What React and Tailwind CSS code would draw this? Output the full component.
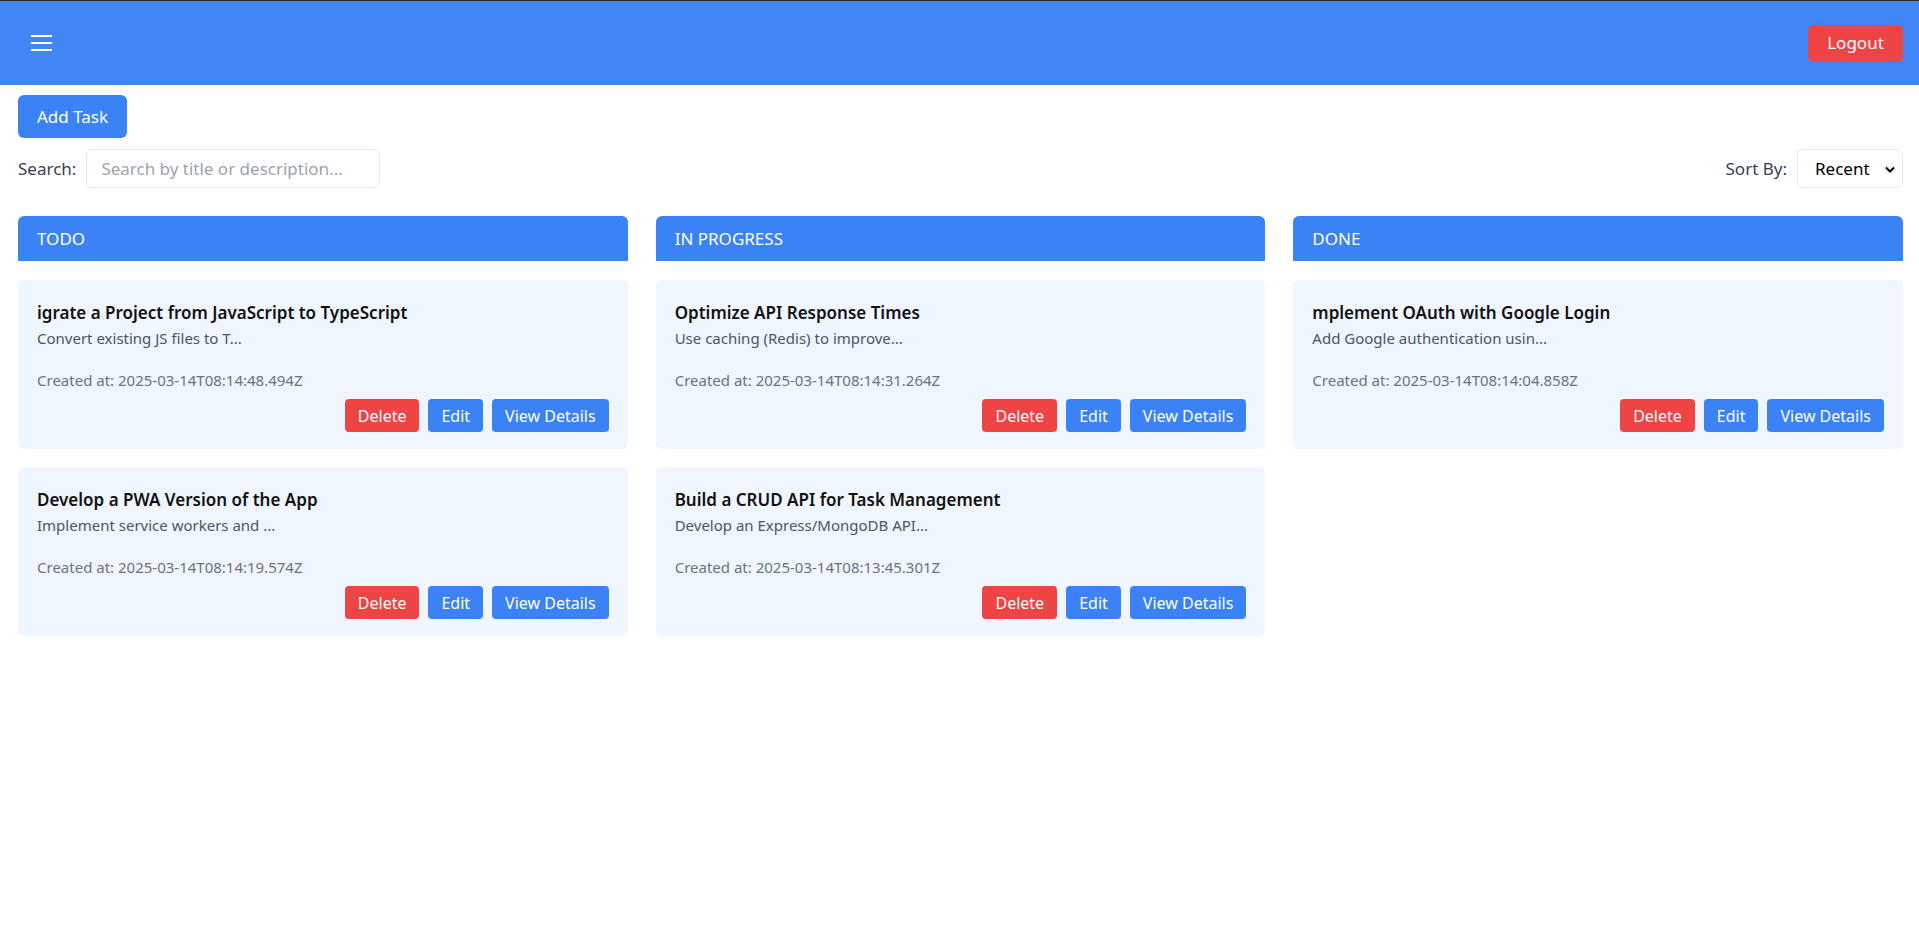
import React from "react";

const columns = [
  {
    name: "TODO",
    tasks: [
      {
        title: "igrate a Project from JavaScript to TypeScript",
        desc: "Convert existing JS files to T...",
        created: "2025-03-14T08:14:48.494Z",
      },
      {
        title: "Develop a PWA Version of the App",
        desc: "Implement service workers and ...",
        created: "2025-03-14T08:14:19.574Z",
      },
    ],
  },
  {
    name: "IN PROGRESS",
    tasks: [
      {
        title: "Optimize API Response Times",
        desc: "Use caching (Redis) to improve...",
        created: "2025-03-14T08:14:31.264Z",
      },
      {
        title: "Build a CRUD API for Task Management",
        desc: "Develop an Express/MongoDB API...",
        created: "2025-03-14T08:13:45.301Z",
      },
    ],
  },
  {
    name: "DONE",
    tasks: [
      {
        title: "mplement OAuth with Google Login",
        desc: "Add Google authentication usin...",
        created: "2025-03-14T08:14:04.858Z",
      },
    ],
  },
];

function TaskCard({ task }) {
  return (
    <div className="bg-[#eff6ff] rounded-md px-[19px] pt-[21px] pb-[17px]">
      <div className="text-[17px] leading-6 font-semibold text-[#111111]">{task.title}</div>
      <div className="mt-[3px] text-[15px] leading-5 text-[#4b5563]">{task.desc}</div>
      <div className="mt-[22px] text-[15px] leading-5 text-[#6b7280]">Created at: {task.created}</div>
      <div className="mt-[9px] flex justify-end gap-[9px]">
        <button className="h-[33px] px-[13px] rounded bg-[#ef4444] text-white text-base leading-6">Delete</button>
        <button className="h-[33px] px-[13px] rounded bg-[#3b82f6] text-white text-base leading-6">Edit</button>
        <button className="h-[33px] px-[13px] rounded bg-[#3b82f6] text-white text-base leading-6">View Details</button>
      </div>
    </div>
  );
}

export default function App() {
  return (
    <div
      className="min-h-screen bg-white"
      style={{ fontFamily: '"Segoe UI", "Noto Sans", "Open Sans", sans-serif' }}
    >
      <div className="h-px bg-[#2a2a2a]" />
      <nav className="h-[84px] bg-[#4285f4] flex items-center justify-between pl-[31px] pr-4">
        <svg width="21" height="16" viewBox="0 0 21 16" fill="none">
          <path d="M0 1h21M0 8h21M0 15h21" stroke="white" strokeWidth="2" />
        </svg>
        <button className="h-[37px] w-[95px] rounded-md bg-[#ef4444] text-white text-[17px] leading-6">
          Logout
        </button>
      </nav>
      <main className="pl-[18px] pr-4 pt-[10px]">
        <button className="h-[43px] px-[19px] rounded-md bg-[#3b82f6] text-white text-[17px] leading-6">
          Add Task
        </button>
        <div className="mt-[11px] flex items-center justify-between">
          <div className="flex items-center gap-[10px]">
            <label className="text-[17px] text-[#374151]">Search:</label>
            <input
              className="w-[294px] h-[39px] border border-[#e5e7eb] rounded-md px-[14px] text-[17px] outline-none placeholder:text-[#9ca3af]"
              placeholder="Search by title or description..."
            />
          </div>
          <div className="flex items-center gap-[10px]">
            <label className="text-[17px] text-[#374151]">Sort By:</label>
            <div className="relative w-[106px] h-[39px] border border-[#e5e7eb] rounded-md flex items-center pl-[17px] text-[17px] text-black bg-white">
              Recent
              <svg
                className="absolute right-[7px] top-[16px]"
                width="10"
                height="7"
                viewBox="0 0 10 7"
                fill="none"
              >
                <path d="M1 1.5l4 4 4-4" stroke="black" strokeWidth="2" />
              </svg>
            </div>
          </div>
        </div>
        <div className="mt-[28px] grid grid-cols-3 gap-7">
          {columns.map((col) => (
            <div key={col.name}>
              <div className="h-[45px] rounded-t-md bg-[#3b82f6] text-white text-[17px] flex items-center pl-[19px]">
                {col.name}
              </div>
              <div className="mt-[19px] flex flex-col gap-[18px]">
                {col.tasks.map((t) => (
                  <TaskCard key={t.title} task={t} />
                ))}
              </div>
            </div>
          ))}
        </div>
      </main>
    </div>
  );
}
